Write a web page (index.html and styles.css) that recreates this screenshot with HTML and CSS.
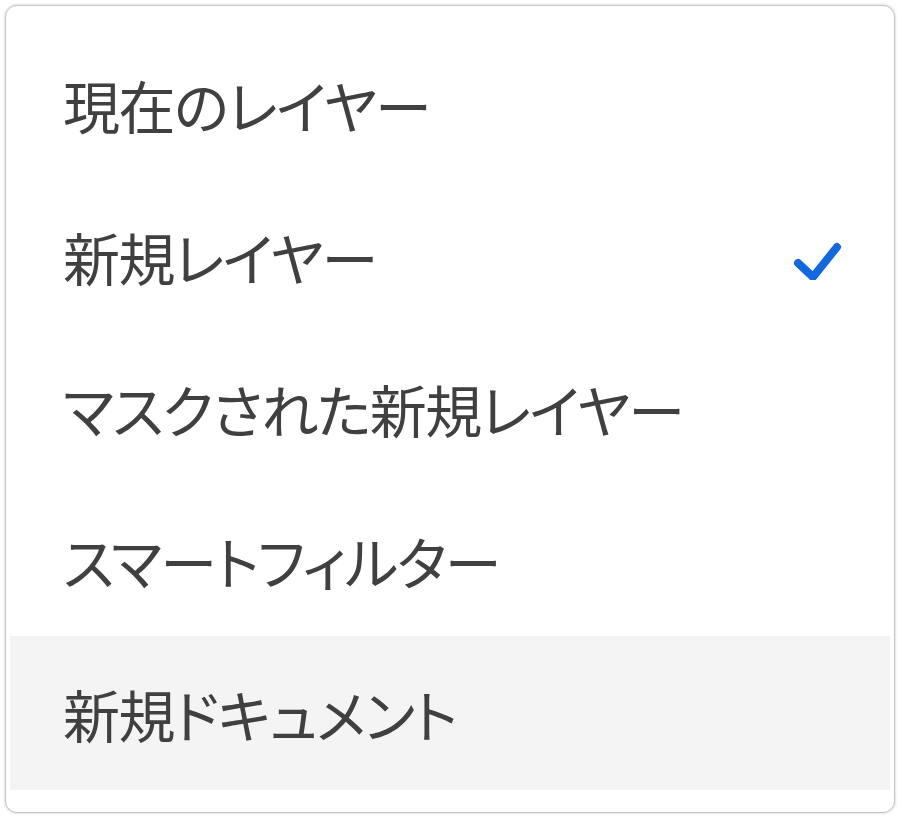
FILE: index.html
```html
<!DOCTYPE html>
<html lang="ja">
<head>
<meta charset="utf-8">
<link rel="stylesheet" href="styles.css">
</head>
<body>
<div class="menu">
  <div class="item"><span class="label">現在のレイヤー</span></div>
  <div class="item"><span class="label">新規レイヤー</span>
    <svg class="check" width="50" height="44" viewBox="0 0 50 44"><path d="M6 27 L21 41 L45 11" fill="none" stroke="#1168e0" stroke-width="8" stroke-linecap="round" stroke-linejoin="round"/></svg>
  </div>
  <div class="item"><span class="label">マスクされた新規レイヤー</span></div>
  <div class="item"><span class="label">スマートフィルター</span></div>
  <div class="item hover"><span class="label">新規ドキュメント</span></div>
</div>
</body>
</html>
```
FILE: styles.css
```css
html, body { margin: 0; padding: 0; background: #fff; }
body { width: 900px; height: 815px; }
.menu {
  margin: 5px;
  width: 890px;
  box-sizing: border-box;
  border: 1px solid #c6c6c6;
  border-radius: 12px;
  box-shadow: 0 0 3px rgba(0,0,0,0.22);
  padding: 22px 4px;
  background: #fff;
  font-family: "Noto Sans CJK JP", sans-serif;
  font-feature-settings: "palt";
}
.item {
  height: 152px;
  display: flex;
  align-items: center;
  justify-content: space-between;
  padding: 0 48px 0 53px;
  color: #404040;
  font-size: 57px;
  letter-spacing: -1.5px;
}
.label { line-height: 1; }
.item.hover { background: #f4f4f4; height: 154px; }
.check { display: block; margin-top: 4px; }
```
